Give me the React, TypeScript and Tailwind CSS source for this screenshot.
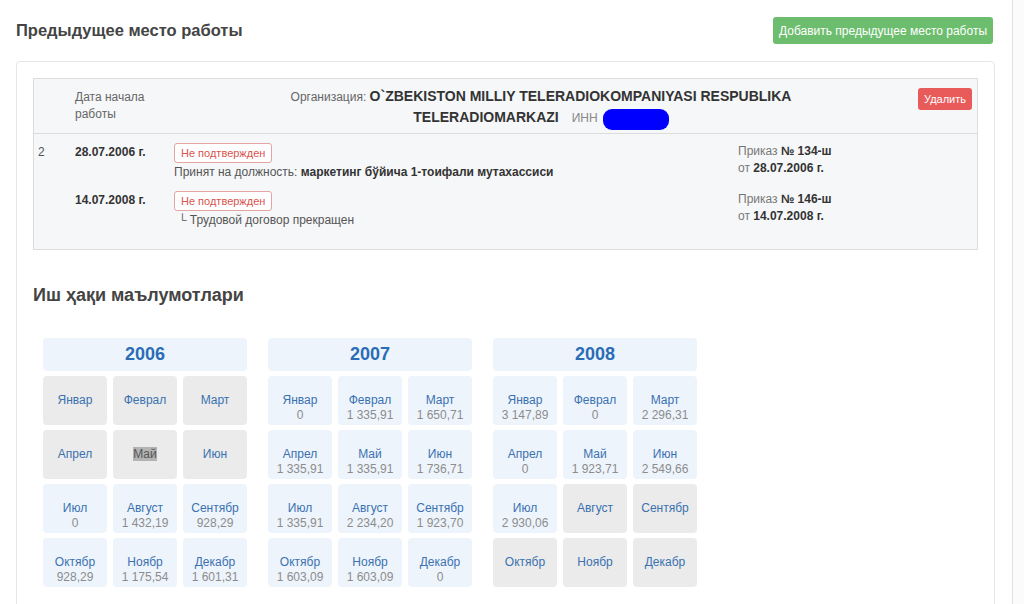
import React from 'react'

type Month = { name: string; value?: string; sel?: boolean }
type Year = { year: string; months: Month[] }

const years: Year[] = [
  {
    year: '2006',
    months: [
      { name: 'Январ' },
      { name: 'Феврал' },
      { name: 'Март' },
      { name: 'Апрел' },
      { name: 'Май', sel: true },
      { name: 'Июн' },
      { name: 'Июл', value: '0' },
      { name: 'Август', value: '1 432,19' },
      { name: 'Сентябр', value: '928,29' },
      { name: 'Октябр', value: '928,29' },
      { name: 'Ноябр', value: '1 175,54' },
      { name: 'Декабр', value: '1 601,31' },
    ],
  },
  {
    year: '2007',
    months: [
      { name: 'Январ', value: '0' },
      { name: 'Феврал', value: '1 335,91' },
      { name: 'Март', value: '1 650,71' },
      { name: 'Апрел', value: '1 335,91' },
      { name: 'Май', value: '1 335,91' },
      { name: 'Июн', value: '1 736,71' },
      { name: 'Июл', value: '1 335,91' },
      { name: 'Август', value: '2 234,20' },
      { name: 'Сентябр', value: '1 923,70' },
      { name: 'Октябр', value: '1 603,09' },
      { name: 'Ноябр', value: '1 603,09' },
      { name: 'Декабр', value: '0' },
    ],
  },
  {
    year: '2008',
    months: [
      { name: 'Январ', value: '3 147,89' },
      { name: 'Феврал', value: '0' },
      { name: 'Март', value: '2 296,31' },
      { name: 'Апрел', value: '0' },
      { name: 'Май', value: '1 923,71' },
      { name: 'Июн', value: '2 549,66' },
      { name: 'Июл', value: '2 930,06' },
      { name: 'Август' },
      { name: 'Сентябр' },
      { name: 'Октябр' },
      { name: 'Ноябр' },
      { name: 'Декабр' },
    ],
  },
]

const font = { fontFamily: '"Liberation Sans", Arial, sans-serif' }

function Badge() {
  return (
    <span className="inline-flex items-center h-[20px] px-[6px] border border-[#e6a4a4] rounded-[3px] text-[11px] text-[#d9534f] bg-white">
      Не подтвержден
    </span>
  )
}

function YearCard({ y }: { y: Year }) {
  return (
    <div className="w-[204px]">
      <div className="h-[33px] rounded-[4px] bg-[#eef4fc] flex items-center justify-center text-[18px] font-bold text-[#2a6cb6]">
        {y.year}
      </div>
      <div className="grid grid-cols-3 gap-x-[6px] gap-y-[5px] mt-[5px]">
        {y.months.map((m) => (
          <div
            key={m.name}
            className={`h-[49px] rounded-[4px] pt-[17px] text-center text-[12px] leading-[15px] ${
              m.value !== undefined ? 'bg-[#eef4fc]' : 'bg-[#ebebeb]'
            }`}
          >
            <div className="text-[#3a72b0]">
              {m.sel ? <span className="bg-[#b3b3b3] text-[#555]">{m.name}</span> : m.name}
            </div>
            {m.value !== undefined && <div className="text-[#8c8c8c]">{m.value}</div>}
          </div>
        ))}
      </div>
    </div>
  )
}

export default function App() {
  return (
    <div className="flex min-h-[604px] bg-white text-[#555]" style={font}>
      <div className="w-[1013px] border-r border-[#e2e2e2] pl-4 pr-[17px] pt-[17px] pb-10">
        {/* ── Заголовок ── */}
        <div className="flex items-center justify-between h-[27px]">
          <h2 className="text-[16.5px] font-bold text-[#444]">Предыдущее место работы</h2>
          <button className="mr-[2px] h-[27px] w-[220px] rounded-[3px] bg-[#6dbd6e] text-white text-[12px]">
            Добавить предыдущее место работы
          </button>
        </div>

        {/* ── Панель ── */}
        <div className="mt-[17px] border border-[#e6e6e6] rounded-[4px] p-4 pb-10">
          <div className="border border-[#dcdcdc] bg-[#f6f7f9] text-[12px]">
            {/* шапка */}
            <div className="grid grid-cols-[36px_99px_744px_1fr] h-[55px] border-b border-[#dcdcdc]">
              <div />
              <div className="flex items-center pl-[5px] leading-[17px] text-[#666]">
                Дата начала
                <br />
                работы
              </div>
              <div className="flex items-center justify-center pt-[4px]">
                <div className="w-[580px] text-center leading-[20px]">
                  <span className="text-[#666] text-[12px]">Организация: </span>
                  <span className="text-[14px] font-bold text-[#333]">
                    O`ZBEKISTON MILLIY TELERADIOKOMPANIYASI RESPUBLIKA TELERADIOMARKAZI
                  </span>
                  <span className="text-[#888] text-[12px] ml-[13px] mr-[5px]">ИНН</span>
                  <span className="inline-block align-middle w-[66px] h-[21px] bg-[#0000ff] rounded-[9px] mt-[2px]" />
                </div>
              </div>
              <div className="flex justify-end pt-[9px] pr-[5px]">
                <button className="h-[22px] w-[54px] rounded-[3px] bg-[#e95b5b] text-white text-[11px]">
                  Удалить
                </button>
              </div>
            </div>

            {/* строки */}
            <div className="pt-[9px] pb-[20px] space-y-[10px] leading-[17px]">
              <div className="grid grid-cols-[36px_99px_564px_1fr]">
                <div className="pl-[4px] pt-[1px] text-[#555]">2</div>
                <div className="pl-[5px] pt-[1px] font-bold text-[#333]">28.07.2006 г.</div>
                <div className="pl-[5px]">
                  <Badge />
                  <div className="mt-[1px]">
                    Принят на должность:{' '}
                    <b className="text-[#333]">маркетинг бўйича 1-тоифали мутахассиси</b>
                  </div>
                </div>
                <div className="pl-[5px]">
                  <div className="text-[#777]">
                    Приказ <b className="text-[#333]">№ 134-ш</b>
                  </div>
                  <div className="text-[#777]">
                    от <b className="text-[#333]">28.07.2006 г.</b>
                  </div>
                </div>
              </div>
              <div className="grid grid-cols-[36px_99px_564px_1fr]">
                <div />
                <div className="pl-[5px] pt-[1px] font-bold text-[#333]">14.07.2008 г.</div>
                <div className="pl-[5px]">
                  <Badge />
                  <div className="mt-[1px] pl-[4px]">└ Трудовой договор прекращен</div>
                </div>
                <div className="pl-[5px]">
                  <div className="text-[#777]">
                    Приказ <b className="text-[#333]">№ 146-ш</b>
                  </div>
                  <div className="text-[#777]">
                    от <b className="text-[#333]">14.07.2008 г.</b>
                  </div>
                </div>
              </div>
            </div>
          </div>

          {/* ── Иш ҳақи ── */}
          <h3 className="mt-[33px] text-[18px] leading-[24px] font-bold text-[#444]">Иш ҳақи маълумотлари</h3>
          <div className="mt-[31px] ml-[10px] flex gap-[21px]">
            {years.map((y) => (
              <YearCard key={y.year} y={y} />
            ))}
          </div>
        </div>
      </div>
      <div className="flex-1 bg-[#fbfbfb]" />
    </div>
  )
}
